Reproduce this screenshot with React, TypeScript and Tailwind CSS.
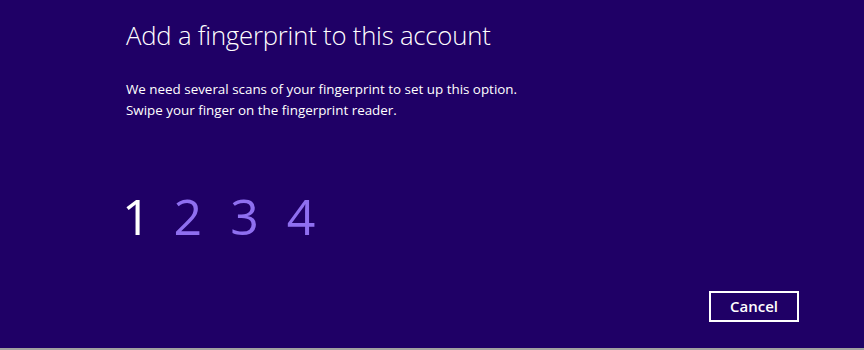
export default function App() {
  const digits = ["1", "2", "3", "4"];
  return (
    <div className="flex h-[350px] w-[864px] flex-col overflow-hidden bg-[#1f0066] font-['Open_Sans',sans-serif] text-white">
      <div className="flex flex-1 flex-col pl-[126px] pr-[65px] pt-[18px]">
        <h1 className="text-[25.7px] font-light leading-[36px] tracking-[-0.2px]">
          Add a fingerprint to this account
        </h1>
        <div className="mt-[25px] text-[13.4px] leading-[21px]">
          <p>We need several scans of your fingerprint to set up this option.</p>
          <p>Swipe your finger on the fingerprint reader.</p>
        </div>
        <div className="ml-[-4px] mt-[65px] flex gap-[28px] text-[50px] font-normal leading-[60px]">
          {digits.map((d, i) => (
            <span key={d} className={i === 0 ? "mr-[-5px] text-white" : "text-[#8f6ff0]"}>
              {d}
            </span>
          ))}
        </div>
        <div className="mt-auto mb-[26px] flex justify-end">
          <button className="h-[31px] w-[90px] border-2 border-white text-[15px] font-semibold">
            Cancel
          </button>
        </div>
      </div>
      <div className="h-[2px] bg-[#a0a0a0]" />
    </div>
  );
}
